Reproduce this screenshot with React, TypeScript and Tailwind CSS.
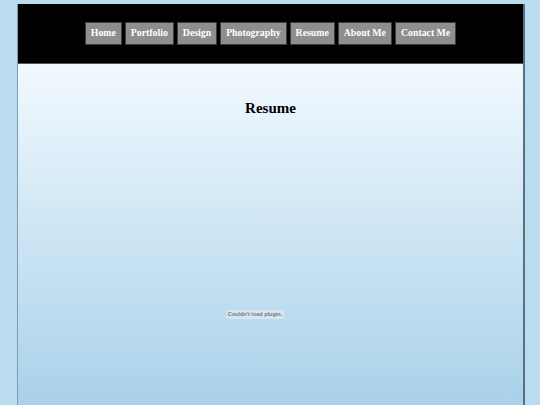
import React from 'react';

const links = ['Home', 'Portfolio', 'Design', 'Photography', 'Resume', 'About Me', 'Contact Me'];

export default function App() {
  return (
    <div className="h-[405px] w-[540px] overflow-hidden bg-[#b9dcef] pt-[4px]" style={{ fontFamily: '"Liberation Serif", serif' }}>
      <div className="ml-[17px] flex h-[420px] w-[506px] flex-col border-l border-[#7d9ab3] shadow-[2px_0_0_#5b6f82]">
        {/* Header */}
        <div className="flex h-[60px] justify-center border-b border-[#555] bg-black pt-[18px]">
          <div className="flex h-[23px] gap-[3px]">
            {links.map((l) => (
              <a
                key={l}
                className="flex items-center border border-[#3c3c3c] bg-[#8e8e8e] px-[5px] text-[9.8px] font-bold text-white"
              >
                {l}
              </a>
            ))}
          </div>
        </div>

        {/* Content */}
        <div className="flex flex-1 flex-col items-center bg-gradient-to-b from-[#f1f9fe] to-[#a5cfe8]">
          <h1 className="mt-[33px] text-[15px] font-bold text-black">Resume</h1>
          <div className="mt-[190px] mr-[31px] rounded-[2px] bg-[#d3e6f2] px-[2px] text-[5.5px] font-bold leading-[9px] text-[#777]" style={{ fontFamily: '"Liberation Sans", sans-serif' }}>
            Couldn't load plugin.
          </div>
        </div>
      </div>
    </div>
  );
}
